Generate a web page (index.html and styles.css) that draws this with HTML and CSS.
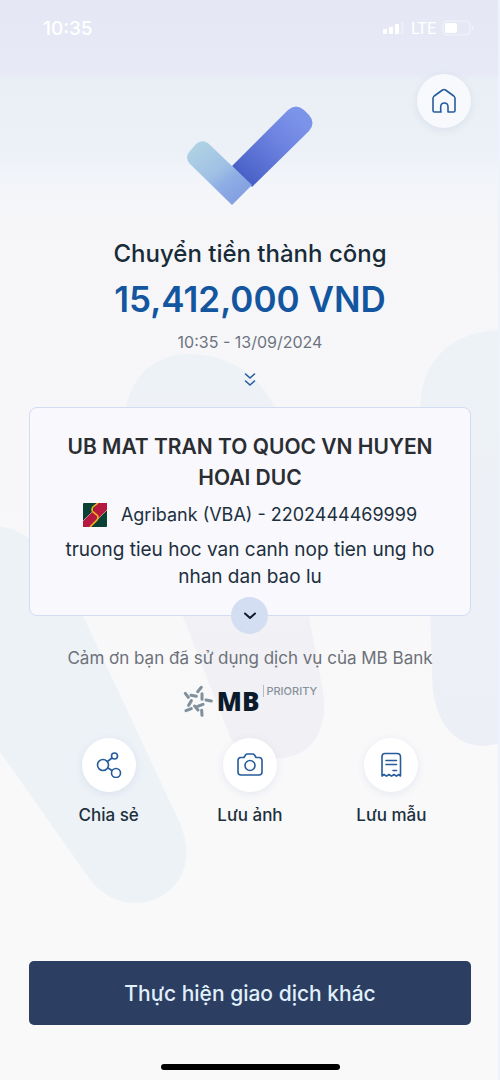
FILE: index.html
```html
<!DOCTYPE html>
<html lang="vi">
<head>
<meta charset="utf-8">
<meta name="viewport" content="width=device-width, initial-scale=1">
<title>Chuyển tiền thành công</title>
<link rel="stylesheet" href="styles.css">
</head>
<body>
<div class="screen">
  <svg class="backdrop" viewBox="0 0 500 1080" preserveAspectRatio="none" aria-hidden="true">
    <defs>
      <linearGradient id="mid" x1="0" y1="0" x2="0" y2="1"><stop offset="0" stop-color="#edf2f7"/><stop offset=".6" stop-color="#f1f1f6"/><stop offset="1" stop-color="#f1f0f4"/></linearGradient>
      <linearGradient id="side" x1="0" y1="0" x2="0" y2="1"><stop offset="0" stop-color="#edf2f6"/><stop offset="1" stop-color="#edeff6"/></linearGradient>
    </defs>
    <path fill="#edf2f7" d="M0 527C36 529 64 574 82 613L181 824C201 873 168 903 136 903C112 903 97 889 88 876L0 752Z"/>
    <path fill="url(#mid)" d="M125 420C127 382 151 354 189 354C230 354 265 376 279 415L310 615L324 690C331 730 312 758 280 758C256 758 242 751 232 739L183 615Z"/>
    <path fill="url(#side)" d="M500 330C450 332 422 365 422 407L432 615L434 680C435 720 455 746 486 746L500 744Z"/>
  </svg>

  <header class="status">
    <span class="clock">10:35</span>
    <span class="signals">
      <svg class="bars" viewBox="0 0 22 14" aria-hidden="true"><g fill="#fff"><rect x="0" y="8" width="4" height="5" rx="1"/><rect x="6" y="6" width="4" height="7" rx="1"/><rect x="12" y="3" width="4" height="10" rx="1"/><rect x="18" y="1" width="3" height="12" rx="1" opacity=".25"/></g></svg>
      <span class="network">LTE</span>
      <svg class="battery" viewBox="0 0 33 16" aria-hidden="true"><rect x="1" y="1" width="27" height="14" rx="4" fill="none" stroke="#fff" stroke-opacity=".5"/><rect x="3" y="3" width="12" height="10" rx="2" fill="#fff"/><path d="M30 6q3 2 0 4z" fill="#fff" opacity=".6"/></svg>
    </span>
  </header>

  <main class="content">
    <div class="hero">
      <svg class="check" viewBox="0 0 126 100" aria-hidden="true">
        <defs>
          <linearGradient id="long" gradientUnits="userSpaceOnUse" x1="56" y1="70" x2="110" y2="12"><stop offset="0" stop-color="#4a61c8"/><stop offset=".55" stop-color="#6a80de"/><stop offset="1" stop-color="#7c93ea"/></linearGradient>
          <linearGradient id="short" gradientUnits="userSpaceOnUse" x1="10" y1="42" x2="50" y2="94"><stop offset="0" stop-color="#aed1e4"/><stop offset=".48" stop-color="#a0c1e4"/><stop offset=".68" stop-color="#8faee4"/><stop offset="1" stop-color="#84a0e2"/></linearGradient>
        </defs>
        <path fill="url(#long)" d="M45 61L101 5Q109 -2 117 5L122 10Q129 18 122 26L65 82Z"/>
        <path fill="url(#short)" d="M3 46L9 39Q16 33 23 40L65 80L45 100L3 59Q-3 52 3 46Z"/>
      </svg>
      <button class="round home" type="button" aria-label="Trang chủ">
        <svg class="icon" viewBox="0 0 26 26" aria-hidden="true"><path d="M10.200 24H3.500Q2 24 2 22.500V10.500Q2 9 3.200 8L11.500 2Q13 1 14.500 2L22.800 8Q24 9 24 10.500V22.500Q24 24 22.500 24H17V19Q17 15 13.400 15Q9.700 15 9.700 19V24"/></svg>
      </button>
    </div>

    <h1 class="title">Chuyển tiền thành công</h1>
    <p class="amount">15,412,000 VND</p>
    <time class="time" datetime="2024-09-13T10:35">10:35 - 13/09/2024</time>
    <svg class="chevrons" viewBox="0 0 12 16" aria-hidden="true"><path d="M1.500 2L6 6L10.500 2M1.500 9L6 13L10.500 9"/></svg>

    <section class="card">
      <h2 class="name">UB MAT TRAN TO QUOC VN HUYEN HOAI DUC</h2>
      <p class="account">
        <svg class="bank" viewBox="0 0 24 24" aria-hidden="true">
          <rect width="24" height="24" rx="1" fill="#0b4034"/>
          <path fill="#b5193f" d="M0 18L9 9L14 0H23Q24 0 24 1V7L15 16L8 24H1Q0 24 0 23Z"/>
          <path fill="none" stroke="#d3a7a7" stroke-width=".8" d="M0 18L9 9M24 7L15 16"/>
          <path fill="none" stroke="#f0b51f" stroke-width="1.600" d="M15 0L10 4Q8 7 10 9L14 12Q16 14 14 17L7 24"/>
        </svg>
        <span>Agribank (VBA) - 2202444469999</span>
      </p>
      <p class="message">truong tieu hoc van canh nop tien ung ho nhan dan bao lu</p>
      <button class="expand" type="button" aria-label="Xem chi tiết"><svg viewBox="0 0 14 10" aria-hidden="true"><path d="M2 2.500L7 7L12 2.500"/></svg></button>
    </section>

    <p class="thanks">Cảm ơn bạn đã sử dụng dịch vụ của MB Bank</p>

    <div class="brand">
      <svg class="star" viewBox="14 13 90 99" aria-hidden="true"><path d="M69 20L58 33M71 39L71 56M99 61L83 58M74 71L58 77M71 104L70 89M59 88L49 76M23 90L39 84M31 74L39 60M21 38L30 50M38 44L54 47"/></svg>
      <strong class="mb">MB</strong>
      <span class="priority">PRIORITY</span>
    </div>

    <nav class="actions">
      <button class="action" type="button">
        <span class="round"><svg class="icon" viewBox="0 0 26 26" aria-hidden="true"><circle cx="7" cy="13" r="5.500"/><circle cx="18.500" cy="4" r="3"/><circle cx="20" cy="21" r="4.500"/><path d="M11.500 9.500L16 6M12 16L16 18.500"/></svg></span>
        Chia sẻ
      </button>
      <button class="action" type="button">
        <span class="round"><svg class="icon" viewBox="0 0 26 26" aria-hidden="true"><path d="M7 5.500L8.500 3Q9 2 10.500 2H15.500Q17 2 17.500 3L19 5.500H22Q25 5.500 25 8.500V20Q25 23 22 23H4Q1 23 1 20V8.500Q1 5.500 4 5.500Z"/><circle cx="13" cy="13.500" r="5"/></svg></span>
        Lưu ảnh
      </button>
      <button class="action" type="button">
        <span class="round"><svg class="icon" viewBox="0 0 26 26" aria-hidden="true"><path d="M4 24V4.500Q4 1.500 7 1.500H19Q22.500 1.500 22.500 5V24L20.500 22.500L18.500 24.200L16 22.500L13.500 24.200L11 22.500L8.500 24.200L6 22.500ZM8 8.500H18.500M8 12.500H18.500M15 18.500H18.500"/></svg></span>
        Lưu mẫu
      </button>
    </nav>
  </main>

  <footer class="footer">
    <button class="primary" type="button">Thực hiện giao dịch khác</button>
    <div class="indicator"></div>
  </footer>
</div>
</body>
</html>
```
FILE: styles.css
```css
* {
  box-sizing: border-box;
}

body {
  margin: 0;
  font-family: Inter, "Noto Sans", sans-serif;
  color: #1c303d;
}

h1, h2, p {
  margin: 0;
}

button {
  padding: 0;
  border: 0;
  background: none;
  color: inherit;
  font: inherit;
  cursor: pointer;
}

.screen {
  position: relative;
  isolation: isolate;
  display: flex;
  flex-direction: column;
  min-height: 100vh;
  border-right: 2px solid #edf2fc;
  background: linear-gradient(#e5e8f4 0, #e7eaf6 74px, #eaeff5 80px, #ecf1f7 150px, #f3f5fa 185px, #f6f6f8 225px, #f7f7f9 400px, #f9f9fa 800px);
}

.backdrop {
  position: absolute;
  inset: 0;
  z-index: -1;
  width: 100%;
  height: 100%;
}

.status {
  display: flex;
  align-items: center;
  justify-content: space-between;
  height: 56px;
  padding: 0 23px 0 43px;
  color: #fff;
}

.clock {
  font-size: 19px;
  font-weight: 500;
}

.signals {
  display: flex;
  align-items: center;
  gap: 6px;
}

.bars {
  width: 22px;
  height: 14px;
}

.network {
  font-size: 16px;
  font-weight: 400;
  font-family: Roboto, sans-serif;
}

.battery {
  width: 33px;
  height: 16px;
}

.content {
  display: flex;
  flex-direction: column;
  align-items: center;
  padding: 18px 27px 0 29px;
}

.hero {
  display: grid;
  grid-template-columns: 1fr auto 1fr;
  align-self: stretch;
  align-items: start;
}

.check {
  grid-column: 2;
  width: 126px;
  height: 100px;
  margin-top: 31px;
}

.round {
  display: grid;
  place-items: center;
  width: 54px;
  height: 54px;
  border-radius: 50%;
  background: #fff;
  box-shadow: 0 2px 8px rgba(60, 90, 150, .1);
}

.home {
  justify-self: end;
  background: #f8f9fd;
}

.icon {
  width: 26px;
  height: 26px;
  fill: none;
  stroke: #265c9c;
  stroke-width: 1.6;
  stroke-linecap: round;
  stroke-linejoin: round;
}

.title {
  margin-top: 33px;
  font-size: 24px;
  line-height: 32px;
  font-weight: 500;
  color: #172c38;
}

.amount {
  margin-top: 7px;
  font-size: 35px;
  line-height: 44px;
  font-weight: 600;
  color: #13569f;
}

.time {
  margin-top: 11px;
  font-size: 16px;
  line-height: 20px;
  color: #6d7480;
}

.chevrons {
  width: 12px;
  height: 16px;
  margin-top: 20px;
  fill: none;
  stroke: #265c9c;
  stroke-width: 1.6;
  stroke-linecap: round;
  stroke-linejoin: round;
}

.card {
  position: relative;
  align-self: stretch;
  display: flex;
  flex-direction: column;
  align-items: center;
  margin-top: 19px;
  padding: 23px 28px 25px;
  border: 1px solid #d3dcf2;
  border-radius: 8px;
  background: #f8f8fd;
  text-align: center;
}

.name {
  font-size: 21px;
  line-height: 31px;
  font-weight: 600;
  color: #2a2d31;
}

.account {
  display: flex;
  align-items: center;
  gap: 14px;
  margin-top: 7px;
  font-size: 18px;
  line-height: 30px;
}

.bank {
  width: 24px;
  height: 24px;
}

.message {
  margin-top: 6px;
  font-size: 19px;
  line-height: 27px;
}

.expand {
  position: absolute;
  bottom: -19px;
  left: 50%;
  display: grid;
  place-items: center;
  width: 37px;
  height: 37px;
  margin-left: -19px;
  border-radius: 50%;
  background: #d3def2;
}

.expand svg {
  width: 14px;
  height: 10px;
  fill: none;
  stroke: #111c30;
  stroke-width: 2;
  stroke-linecap: round;
  stroke-linejoin: round;
}

.thanks {
  margin-top: 30px;
  font-size: 17px;
  line-height: 24px;
  color: #6d7178;
}

.brand {
  display: flex;
  align-items: flex-start;
  gap: 4px;
  margin-top: 15px;
}

.star {
  width: 30px;
  height: 33px;
  fill: none;
  stroke: #7f8f9c;
  stroke-width: 9;
  stroke-linecap: round;
}

.mb {
  font-family: "Open Sans", sans-serif;
  font-size: 26px;
  line-height: 32px;
  font-weight: 800;
  color: #0a1b2b;
}

.priority {
  padding-left: 2px;
  border-left: 1px solid #b5bcc4;
  font-size: 11px;
  line-height: 12px;
  font-weight: 500;
  color: #87919b;
}

.actions {
  display: grid;
  grid-template-columns: repeat(3, 1fr);
  align-self: stretch;
  margin-top: 20px;
  padding: 0 9px;
}

.action {
  display: flex;
  flex-direction: column;
  align-items: center;
  gap: 12px;
  font-size: 17px;
  line-height: 22px;
  font-weight: 500;
}

.footer {
  display: flex;
  flex-direction: column;
  align-items: center;
  margin-top: auto;
  padding: 24px 27px 10px 29px;
}

.primary {
  align-self: stretch;
  height: 64px;
  border-radius: 5px;
  background: #2c3e62;
  color: #e0f0fc;
  font-size: 21px;
  font-weight: 500;
}

.indicator {
  width: 179px;
  height: 6px;
  margin-top: 39px;
  border-radius: 3px;
  background: #000;
}
```
